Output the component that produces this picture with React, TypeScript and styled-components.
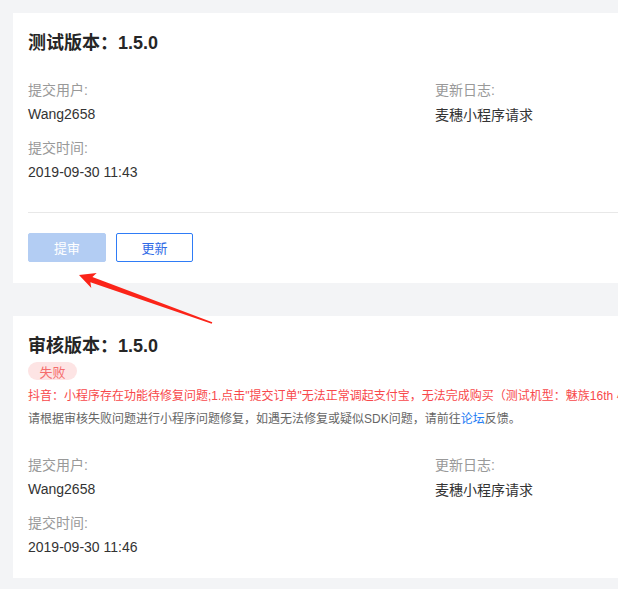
import styled, { createGlobalStyle } from "styled-components";

const GlobalStyle = createGlobalStyle`
  body {
    margin: 0;
    background: #f3f4f6;
    font-family: "Liberation Sans", "Noto Sans CJK SC", sans-serif;
    text-spacing-trim: space-all;
    overflow: hidden;
  }
`;

type Info = { user: string; time: string; log: string };

function InfoGrid({ info }: { info: Info }) {
  return (
    <Grid>
      <Column>
        <Item>
          <Label>提交用户:</Label>
          <Value>{info.user}</Value>
        </Item>
        <Item>
          <Label>提交时间:</Label>
          <Value>{info.time}</Value>
        </Item>
      </Column>
      <Column>
        <Item>
          <Label>更新日志:</Label>
          <Value $shift>{info.log}</Value>
        </Item>
      </Column>
    </Grid>
  );
}

function Arrow() {
  return (
    <ArrowLayer width="618" height="589" viewBox="0 0 618 589">
      <polygon
        fill="#fb2419"
        points="79,275 96.7,272.9 92.4,277 212.3,322.3 211.7,323.7 90.4,282.2 91.3,287.9"
      />
    </ArrowLayer>
  );
}

function App() {
  return (
    <>
      <GlobalStyle />
      <Page>
        <Card>
          <Title>测试版本：1.5.0</Title>
          <InfoGrid
            info={{ user: "Wang2658", time: "2019-09-30 11:43", log: "麦穗小程序请求" }}
          />
          <Divider />
          <Actions>
            <Button $primary disabled>
              提审
            </Button>
            <Button>更新</Button>
          </Actions>
        </Card>
        <Card>
          <Title>审核版本：1.5.0</Title>
          <Tag>失败</Tag>
          <Reason>
            抖音：小程序存在功能待修复问题;1.点击"提交订单"无法正常调起支付宝，无法完成购买（测试机型：魅族16th
            小米9）
          </Reason>
          <Hint>
            请根据审核失败问题进行小程序问题修复，如遇无法修复或疑似SDK问题，请前往<Link>论坛</Link>反馈。
          </Hint>
          <Spacer />
          <InfoGrid
            info={{ user: "Wang2658", time: "2019-09-30 11:46", log: "麦穗小程序请求" }}
          />
        </Card>
        <Arrow />
      </Page>
    </>
  );
}

const Page = styled.div`
  position: relative;
  width: 618px;
  height: 589px;
  padding: 13px 0 0 13px;
  box-sizing: border-box;
  display: flex;
  flex-direction: column;
  gap: 33px;
  overflow: hidden;
`;

const Card = styled.section`
  width: 660px;
  flex-shrink: 0;
  background: #ffffff;
  padding: 18px 15px 21px;
  box-sizing: border-box;
`;

const Title = styled.h2`
  margin: 0;
  font-size: 18px;
  line-height: 24px;
  font-weight: 700;
  color: #262626;
`;

const Grid = styled.div`
  display: flex;
  margin-top: 25px;
`;

const Column = styled.div`
  display: flex;
  flex-direction: column;
  gap: 14px;
  &:first-child {
    width: 407px;
  }
`;

const Item = styled.div`
  display: flex;
  flex-direction: column;
  gap: 4px;
`;

const Label = styled.span`
  font-size: 14px;
  line-height: 20px;
  color: #999999;
`;

const Value = styled.span<{ $shift?: boolean }>`
  font-size: 14px;
  line-height: 20px;
  color: #333333;
  margin-top: ${(p) => (p.$shift ? "1px" : "0")};
`;

const Divider = styled.hr`
  border: none;
  border-top: 1px solid #e8e8e8;
  margin: 30px 0 0;
`;

const Actions = styled.div`
  display: flex;
  gap: 10px;
  margin-top: 20px;
`;

const Button = styled.button<{ $primary?: boolean }>`
  width: ${(p) => (p.$primary ? "78px" : "77px")};
  height: 29px;
  box-sizing: border-box;
  border-radius: 2px;
  font-family: inherit;
  font-size: 13px;
  padding: 0;
  border: 1px solid ${(p) => (p.$primary ? "#b3cdf3" : "#2f7cf6")};
  background: ${(p) => (p.$primary ? "#b3cdf3" : "#ffffff")};
  color: ${(p) => (p.$primary ? "#ffffff" : "#2f6ae6")};
`;

const Tag = styled.span`
  align-self: flex-start;
  display: inline-flex;
  align-items: center;
  justify-content: center;
  width: 49px;
  height: 18px;
  margin-top: 4px;
  border-radius: 9px;
  background: #fde4e4;
  color: #f56c6c;
  font-size: 13px;
`;

const Reason = styled.p`
  margin: 6px 0 0;
  font-size: 12px;
  line-height: 18px;
  color: #f8484b;
  white-space: nowrap;
`;

const Hint = styled.p`
  margin: 5px 0 0;
  font-size: 12px;
  line-height: 18px;
  color: #666666;
  white-space: nowrap;
`;

const Link = styled.a`
  color: #1c7cf4;
`;

const Spacer = styled.div`
  height: 2px;
`;

const ArrowLayer = styled.svg`
  position: absolute;
  left: 0;
  top: 0;
  pointer-events: none;
`;

export default App;
